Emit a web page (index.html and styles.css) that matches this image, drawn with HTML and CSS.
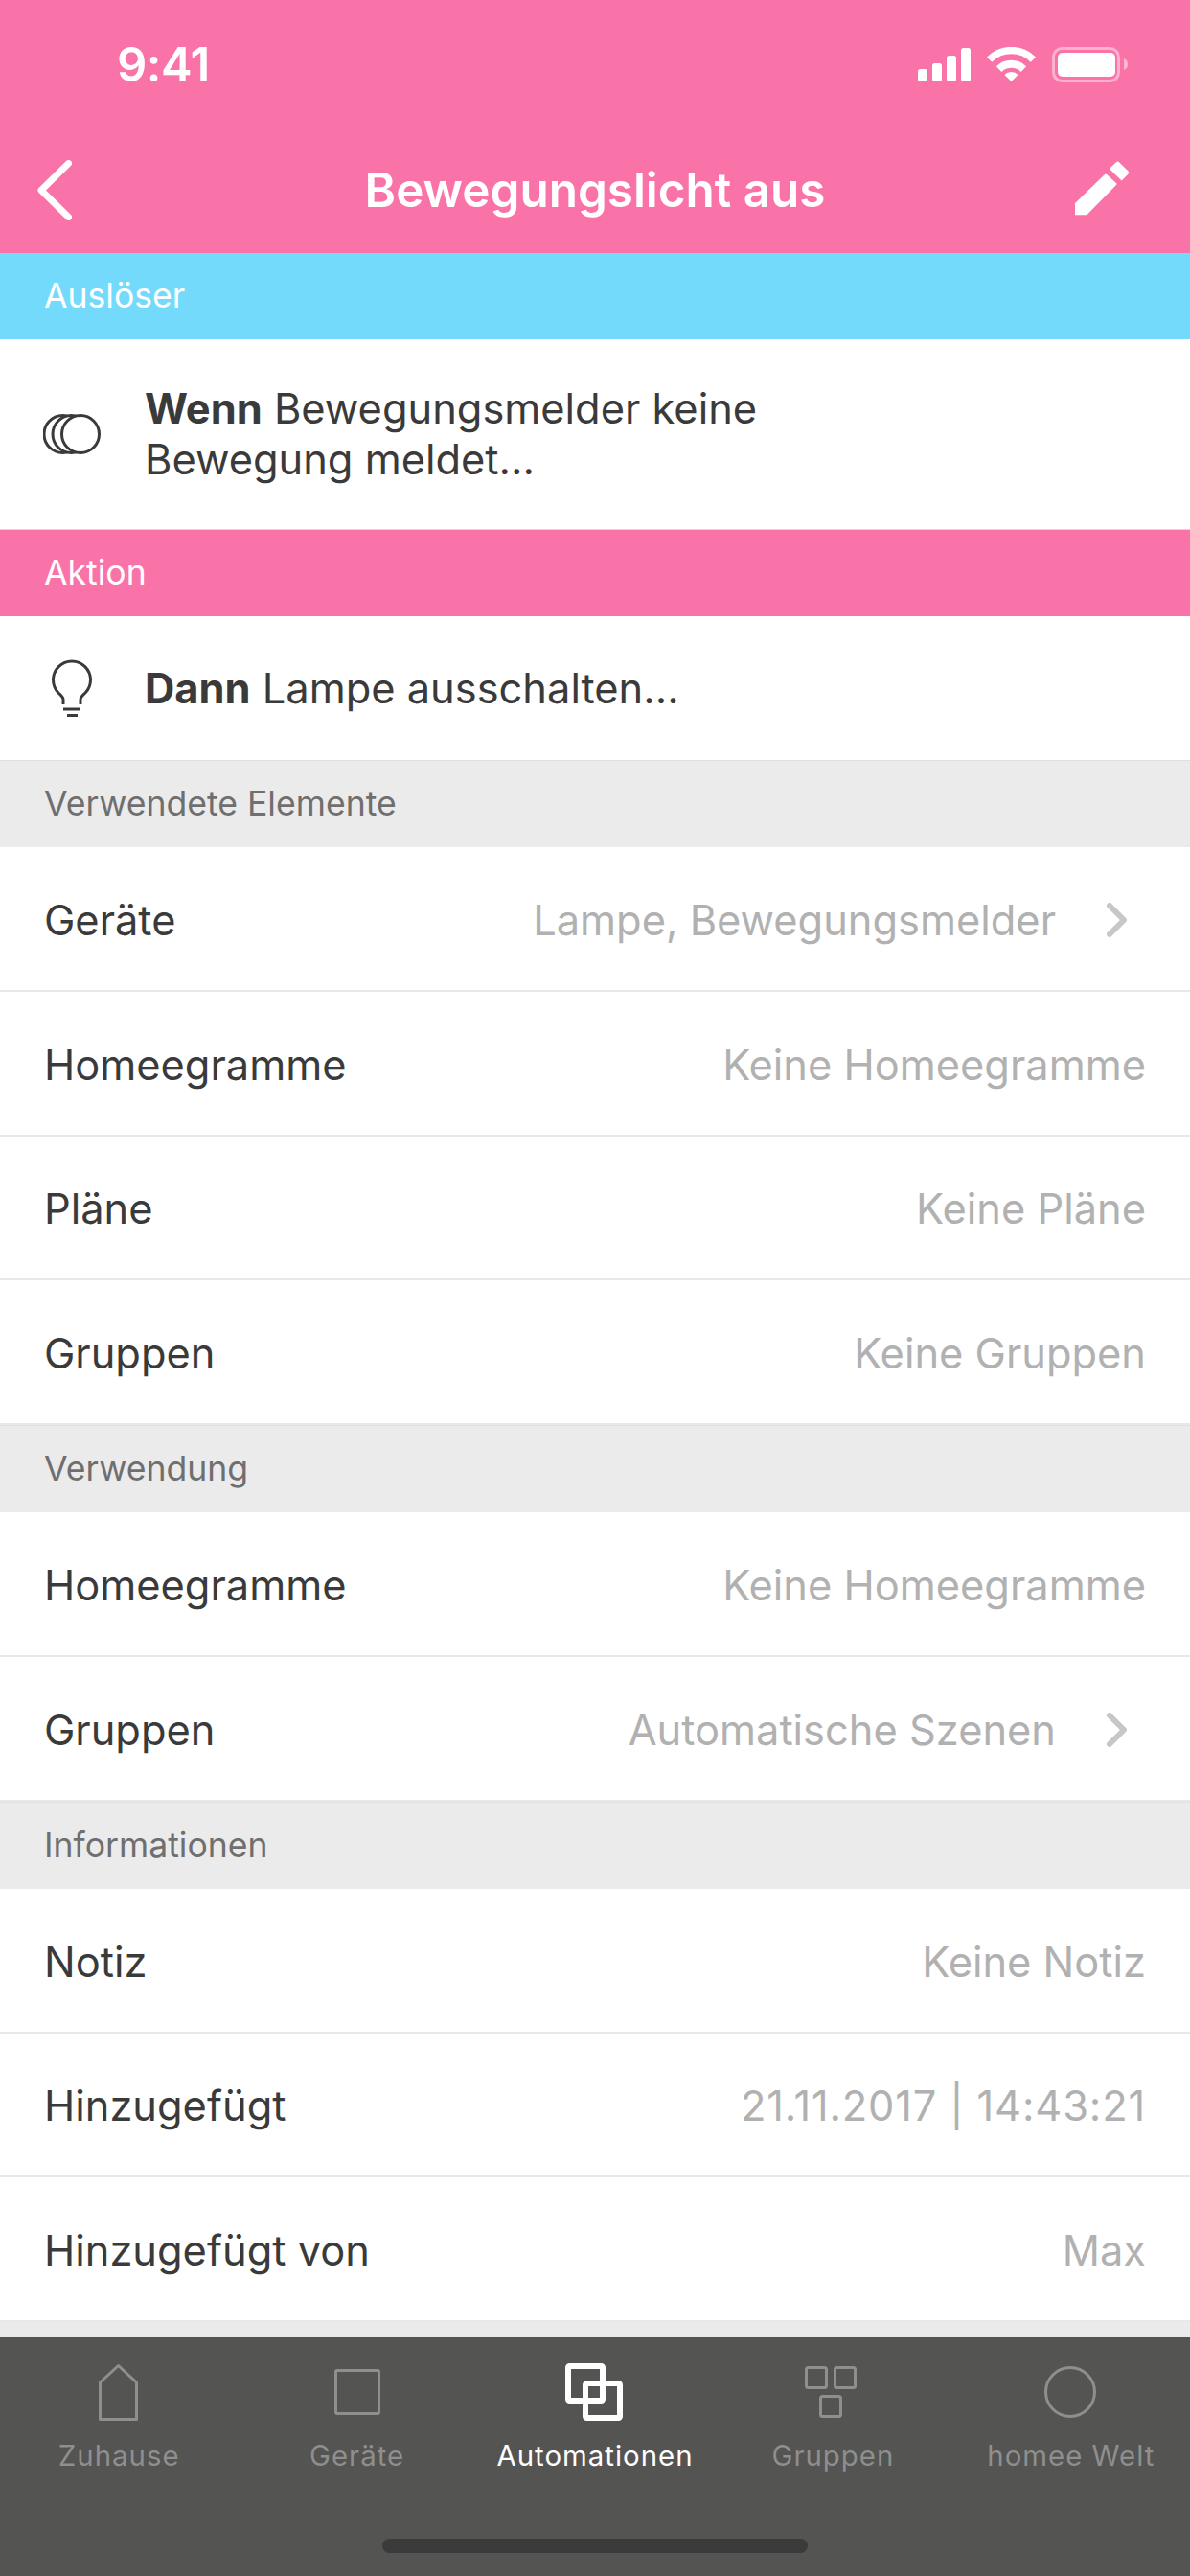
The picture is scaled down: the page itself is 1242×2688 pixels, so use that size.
FILE: index.html
```html
<!DOCTYPE html>
<html lang="de">
<head>
  <meta charset="UTF-8">
  <meta name="viewport" content="width=device-width, initial-scale=1.0">
  <title>Bewegungslicht aus</title>
  <link rel="stylesheet" href="styles.css">
</head>
<body>

<div class="screen">
  <header class="top">
    <div class="status">
      <span class="time">9:41</span>
      <svg class="status-icons" width="219" height="37" viewBox="0 0 219 37">
        <g fill="#fff">
          <rect x="0" y="23" width="10" height="13" rx="2.5"/>
          <rect x="15" y="17" width="10" height="19" rx="2.5"/>
          <rect x="30" y="9" width="10" height="27" rx="2.5"/>
          <rect x="45" y="1" width="10" height="35" rx="2.5"/>
          <path d="M97.5 36 L90.4 28.9 A10 10 0 0 1 104.6 28.9 Z"/>
        </g>
        <g fill="none" stroke="#fff">
          <path stroke-width="7.4" d="M74.6 13.1 A32.3 32.3 0 0 1 120.4 13.1"/>
          <path stroke-width="8" d="M84.6 23.1 A18.3 18.3 0 0 1 110.4 23.1"/>
        </g>
        <rect x="141.5" y="1.5" width="68" height="34" rx="9" fill="none" stroke="#fff" stroke-opacity="0.45" stroke-width="3"/>
        <rect x="146" y="6" width="60" height="25" rx="5" fill="#fff"/>
        <path d="M215 12 C218 13 219 16 219 18 C219 20 218 23 215 24 Z" fill="#fff" fill-opacity="0.5"/>
      </svg>
    </div>
    <nav class="navbar">
      <svg class="nav-back" width="36" height="63" viewBox="0 0 36 63">
        <path d="M32.5 3.5 L4 31.5 L32.5 59.5" fill="none" stroke="#fff" stroke-width="7" stroke-linecap="round" stroke-linejoin="round"/>
      </svg>
      <h1>Bewegungslicht aus</h1>
      <svg class="nav-edit" width="57" height="57" viewBox="0 0 57 57">
        <path d="M0 44 L31 14 Q32 13 33 14 L43 23 Q44 24 43 25 L12.3 56.3 H0 Z" fill="#fff"/>
        <path d="M35.8 8 L43 1.2 Q44.5 0 46 1.2 L55.5 10.5 Q57 12 55.5 13.5 L48.7 20.5 Z" fill="#fff"/>
      </svg>
    </nav>
  </header>

  <main class="content">
    <div class="section-head head-blue">Auslöser</div>
    <div class="rule-row rule-trigger">
      <svg class="rule-icon" width="60" height="42" viewBox="45 432 60 42">
        <g fill="#fff" stroke="#3a3a3a" stroke-width="3">
          <circle cx="65.5" cy="453" r="19.5"/>
          <circle cx="74.5" cy="453" r="19.5"/>
          <circle cx="84" cy="453" r="19.5"/>
        </g>
      </svg>
      <p><b>Wenn</b> Bewegungsmelder keine<br>Bewegung meldet...</p>
    </div>

    <div class="section-head head-pink">Aktion</div>
    <div class="rule-row rule-action">
      <svg class="rule-icon" width="60" height="62" viewBox="45 688 60 62">
        <g fill="none" stroke="#3a3a3a" stroke-width="3">
          <path d="M66 736 V731 C66 728 63 726 61 724 A19.5 19.5 0 1 1 89 724 C87 726 84 728 84 731 V736"/>
          <path d="M66 741 H84 M70 747.5 H81"/>
        </g>
      </svg>
      <p><b>Dann</b> Lampe ausschalten...</p>
    </div>

    <div class="section-head">Verwendete Elemente</div>
    <div class="row">
      <span>Geräte</span>
      <span class="value">Lampe, Bewegungsmelder</span>
      <svg class="chevron" width="21" height="36" viewBox="0 0 21 36"><path d="M3 3 L18 18 L3 33"/></svg>
    </div>
    <div class="row"><span>Homeegramme</span><span class="value">Keine Homeegramme</span></div>
    <div class="row"><span>Pläne</span><span class="value">Keine Pläne</span></div>
    <div class="row"><span>Gruppen</span><span class="value">Keine Gruppen</span></div>

    <div class="section-head">Verwendung</div>
    <div class="row"><span>Homeegramme</span><span class="value">Keine Homeegramme</span></div>
    <div class="row">
      <span>Gruppen</span>
      <span class="value">Automatische Szenen</span>
      <svg class="chevron" width="21" height="36" viewBox="0 0 21 36"><path d="M3 3 L18 18 L3 33"/></svg>
    </div>

    <div class="section-head">Informationen</div>
    <div class="row"><span>Notiz</span><span class="value">Keine Notiz</span></div>
    <div class="row"><span>Hinzugefügt</span><span class="value value-date">21.11.2017 | 14:43:21</span></div>
    <div class="row"><span>Hinzugefügt von</span><span class="value">Max</span></div>
  </main>

  <footer class="tabbar">
    <div class="tab">
      <svg width="60" height="60" viewBox="0 0 60 60">
        <path d="M10.5 58.5 V20 L29.5 2.5 L48.5 20 V58.5 Z"/>
      </svg>
      <span>Zuhause</span>
    </div>
    <div class="tab">
      <svg width="60" height="60" viewBox="0 0 60 60">
        <rect x="7.5" y="7.5" width="45" height="45" rx="1.5"/>
      </svg>
      <span>Geräte</span>
    </div>
    <div class="tab tab-active">
      <svg width="60" height="60" viewBox="0 0 60 60">
        <rect x="2" y="3" width="36" height="36" rx="1.5"/>
        <rect x="20" y="21" width="36" height="36" rx="1.5"/>
      </svg>
      <span>Automationen</span>
    </div>
    <div class="tab">
      <svg width="60" height="60" viewBox="0 0 60 60">
        <rect x="2.5" y="4.5" width="21" height="21" rx="2"/>
        <rect x="32.5" y="4.5" width="21" height="21" rx="2"/>
        <rect x="17.5" y="34.5" width="21" height="21" rx="2"/>
      </svg>
      <span>Gruppen</span>
    </div>
    <div class="tab">
      <svg width="60" height="60" viewBox="0 0 60 60">
        <circle cx="29" cy="30" r="25.5"/>
      </svg>
      <span>homee Welt</span>
    </div>
    <div class="home-bar"></div>
  </footer>
</div>

</body>
</html>
```

FILE: styles.css
```css
body {
  margin: 0;
  font-family: 'Inter', 'Noto Sans', sans-serif;
  color: #3a3a3a;
  background: #ebebeb;
}

.screen {
  width: 1242px;
  height: 2688px;
  display: flex;
  flex-direction: column;
  overflow: hidden;
}

/* pink top area */
.top {
  height: 264px;
  background: #fa73a8;
  color: #fff;
}

.status {
  height: 132px;
  box-sizing: border-box;
  padding: 49px 65px 0 122px;
  display: flex;
  justify-content: space-between;
  align-items: flex-start;
}

.time {
  font-size: 49px;
  font-weight: 600;
  line-height: 37px;
  letter-spacing: -0.5px;
}

.navbar {
  height: 132px;
  padding: 0 39px;
  display: grid;
  grid-template-columns: 1fr auto 1fr;
  align-items: center;
}

.navbar h1 {
  margin: 0;
  font-size: 49.4px;
  font-weight: 600;
  line-height: 60px;
}

.nav-edit {
  justify-self: end;
  margin: 0 24px 4px 0;
}

.content {
  flex: 1;
  background: #ebebeb;
}

/* section titles */
.section-head {
  height: 91px;
  box-sizing: border-box;
  padding-left: 46px;
  border-top: 1px solid #e0e0e0;
  font-size: 35.6px;
  line-height: 90px;
  color: #6f6f6f;
  background: #ebebeb;
}

.head-blue,
.head-pink {
  height: 90px;
  border-top: 0;
  color: #fff;
}

.head-blue {
  background: #74dafb;
}

.head-pink {
  background: #fa73a8;
}

/* Wenn / Dann rows */
.rule-row {
  display: flex;
  align-items: center;
  background: #fff;
  font-size: 43.4px;
}

.rule-row p {
  margin: 0;
  line-height: 53px;
}

.rule-row b {
  font-weight: 700;
}

.rule-trigger {
  height: 199px;
  box-sizing: border-box;
  border-bottom: 1px solid #d8d8d8;
}

.rule-action {
  height: 150px;
}

.rule-icon {
  flex: none;
  margin: 0 46px 0 45px;
}

/* list rows */
.row {
  height: 150.8px;
  box-sizing: border-box;
  padding: 3px 46px 0;
  display: flex;
  align-items: center;
  background: #fff;
  border-bottom: 2px solid #e8e8e8;
  font-size: 43.4px;
}

.value {
  margin-left: auto;
  color: #b1b1b1;
}

.value-date {
  letter-spacing: 0.85px;
}

.chevron {
  margin: 0 20px 0 53px;
  fill: none;
  stroke: #c7c7c7;
  stroke-width: 6;
  stroke-linecap: round;
  stroke-linejoin: round;
}

/* bottom tabs */
.tabbar {
  position: relative;
  height: 249px;
  flex: none;
  box-sizing: border-box;
  padding-top: 27px;
  display: grid;
  grid-template-columns: repeat(5, 1fr);
  align-items: start;
  background: #545453;
}

.tab {
  display: flex;
  flex-direction: column;
  align-items: center;
  color: #8f8f8e;
  font-size: 29.4px;
  letter-spacing: 1px;
  white-space: nowrap;
}

.tab svg {
  overflow: visible;
  fill: none;
  stroke: #8f8f8e;
  stroke-width: 3;
  stroke-linejoin: round;
}

.tab span {
  margin-top: 19px;
  line-height: 36px;
}

.tab-active {
  color: #fff;
}

.tab-active svg {
  stroke: #fff;
  stroke-width: 6;
}

.home-bar {
  position: absolute;
  left: 399px;
  bottom: 24px;
  width: 444px;
  height: 15px;
  border-radius: 8px;
  background: #3b3b3b;
}
```
